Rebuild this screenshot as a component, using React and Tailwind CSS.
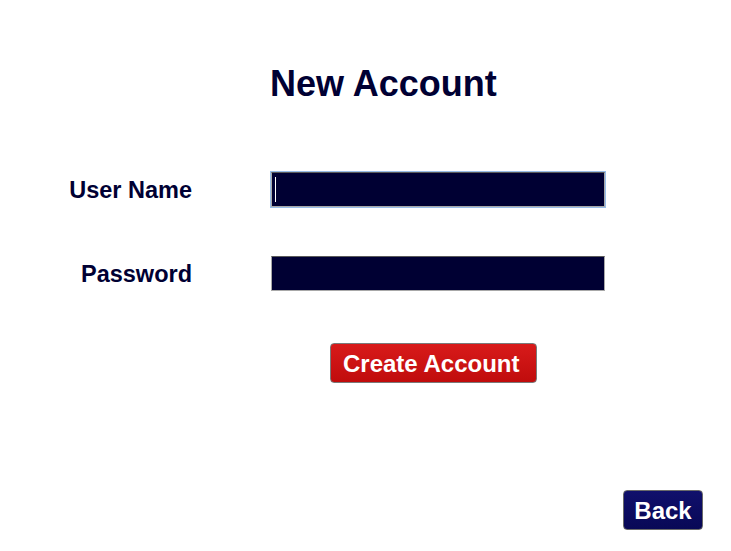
import React from 'react';

const font = "font-['Liberation_Sans',Arial,sans-serif]";

const Field = ({ label, focused }) => (
  <div className="flex items-center">
    <label className="w-[192px] pt-[2px] text-right text-[23.5px] font-bold leading-none text-[#000033]">
      {label}
    </label>
    <div className="relative ml-[79px]">
      <input
        type={label === 'Password' ? 'password' : 'text'}
        readOnly
        className={`block w-[334px] h-[35px] bg-[#000033] border border-[#a8a8a8] border-t-[#5a5a5a] outline-none caret-transparent ${
          focused ? 'ring-1 ring-[#98bde8] border-[#8eaede]' : ''
        }`}
      />
      {focused && <div className="absolute left-[4px] top-[5px] w-[1px] h-[25px] bg-white" />}
    </div>
  </div>
);

export default function App() {
  return (
    <div className={`w-[731px] h-[551px] bg-white ${font} flex flex-col`}>
      <h1 className="mt-[66px] pl-[270px] text-[36px] font-bold leading-none text-[#000033]">
        New Account
      </h1>

      <div className="mt-[70px] flex flex-col gap-[49px]">
        <Field label="User Name" focused />
        <Field label="Password" />
      </div>

      <div className="mt-[52px] pl-[330px]">
        <button className="w-[207px] h-[40px] pl-[12px] pt-[1px] text-left rounded-[4px] border border-[#7a7a7a] bg-gradient-to-b from-[#d81a1a] to-[#c00c0c] text-white text-[24px] font-bold leading-none">
          Create Account
        </button>
      </div>

      <div className="mt-[107px] flex justify-end pr-[28px]">
        <button className="w-[80px] h-[40px] pt-[1px] rounded-[4px] border border-[#6a6a6a] bg-gradient-to-b from-[#10106c] to-[#080856] text-white text-[24px] font-bold leading-none">
          Back
        </button>
      </div>
    </div>
  );
}
